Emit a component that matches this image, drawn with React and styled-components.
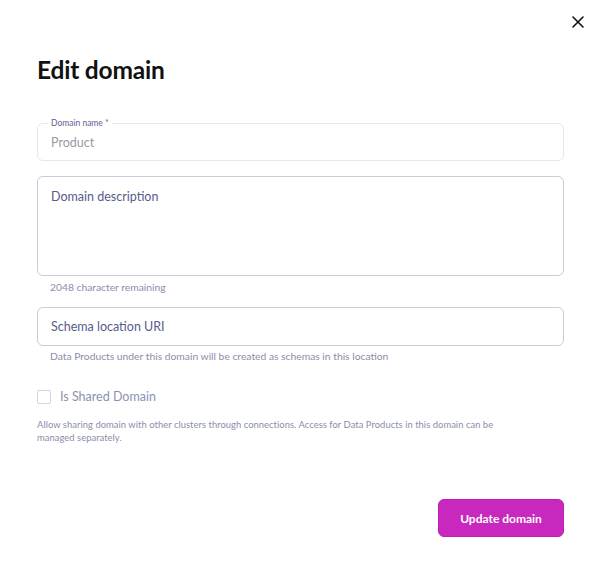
import styled, { createGlobalStyle } from "styled-components";

const GlobalStyle = createGlobalStyle`
  html, body {
    margin: 0;
    padding: 0;
    background: #ffffff;
  }
  body {
    font-family: Lato, "Noto Sans", sans-serif;
  }
`;

const Dialog = styled.div`
  box-sizing: border-box;
  width: 600px;
  height: 569px;
  padding: 0 36px 0 37px;
  display: flex;
  flex-direction: column;
`;

const TopBar = styled.div`
  display: flex;
  justify-content: flex-end;
  height: 44px;
  align-items: center;
  margin-right: -22px;
`;

const CloseButton = styled.button`
  border: none;
  background: none;
  padding: 0;
  width: 16px;
  height: 16px;
  display: flex;
  align-items: center;
  justify-content: center;
  cursor: pointer;
`;

const Title = styled.h1`
  margin: 12px 0 0;
  font-size: 24.5px;
  line-height: 28px;
  font-weight: 700;
  color: #111111;
  letter-spacing: -0.2px;
`;

const Field = styled.div`
  position: relative;
  margin-top: 39px;
  padding: 0 13px;
  height: 38px;
  box-sizing: border-box;
  border: 1px solid #e6e7ef;
  border-radius: 6px;
  display: flex;
  align-items: center;
`;

const FloatLabel = styled.span`
  position: absolute;
  top: -5px;
  left: 10px;
  padding: 0 3px;
  background: #ffffff;
  font-size: 8.5px;
  line-height: 9px;
  color: #5e6390;
`;

const Input = styled.input`
  border: none;
  outline: none;
  width: 100%;
  padding: 0;
  font-family: inherit;
  font-size: 12.5px;
  color: #9a9aa2;
  background: transparent;

  &::placeholder {
    color: #9a9aa2;
  }
`;

const Box = styled.div`
  margin-top: ${(p) => p.$top}px;
  box-sizing: border-box;
  height: ${(p) => p.$height}px;
  border: 1px solid #c8cbda;
  border-radius: 6px;
  padding: ${(p) => (p.$multi ? "12px 13px" : "0 13px")};
  display: flex;
  align-items: ${(p) => (p.$multi ? "flex-start" : "center")};
  font-size: 12.5px;
  color: #565c8a;
`;

const Helper = styled.div`
  margin: ${(p) => p.$top}px 0 0 13px;
  font-size: 10.3px;
  line-height: 13px;
  color: #8a8eab;
`;

const CheckRow = styled.label`
  margin-top: 26px;
  display: flex;
  align-items: center;
  gap: 9px;
  font-size: 12.5px;
  line-height: 15px;
  color: #8d91b0;
`;

const CheckBox = styled.span`
  width: 12px;
  height: 12px;
  border: 1px solid #d3d5e2;
  border-radius: 2px;
`;

const Note = styled.p`
  margin: 14px 0 0;
  font-size: 9.4px;
  line-height: 13px;
  color: #8a8eab;
  max-width: 460px;
  letter-spacing: 0.05px;
`;

const Footer = styled.div`
  margin-top: auto;
  margin-bottom: 32px;
  display: flex;
  justify-content: flex-end;
`;

const PrimaryButton = styled.button`
  width: 126px;
  height: 38px;
  border: 1px solid #b91fb0;
  border-radius: 6px;
  background: #c928bf;
  color: #ffffff;
  font-family: inherit;
  font-size: 12px;
  font-weight: 700;
  cursor: pointer;
`;

export default function App() {
  return (
    <>
      <GlobalStyle />
      <Dialog>
        <TopBar>
          <CloseButton aria-label="Close">
            <svg width="12" height="12" viewBox="0 0 12 12">
              <path d="M1 1 L11 11 M11 1 L1 11" stroke="#111" strokeWidth="1.6" strokeLinecap="round" />
            </svg>
          </CloseButton>
        </TopBar>
        <Title>Edit domain</Title>
        <Field>
          <FloatLabel>Domain name *</FloatLabel>
          <Input placeholder="Product" />
        </Field>
        <Box $top={15} $height={100} $multi>
          Domain description
        </Box>
        <Helper $top={5}>2048 character remaining</Helper>
        <Box $top={13} $height={39}>
          Schema location URI
        </Box>
        <Helper $top={4}>Data Products under this domain will be created as schemas in this location</Helper>
        <CheckRow>
          <CheckBox />
          Is Shared Domain
        </CheckRow>
        <Note>
          Allow sharing domain with other clusters through connections. Access for Data Products in this domain can be
          managed separately.
        </Note>
        <Footer>
          <PrimaryButton>Update domain</PrimaryButton>
        </Footer>
      </Dialog>
    </>
  );
}
